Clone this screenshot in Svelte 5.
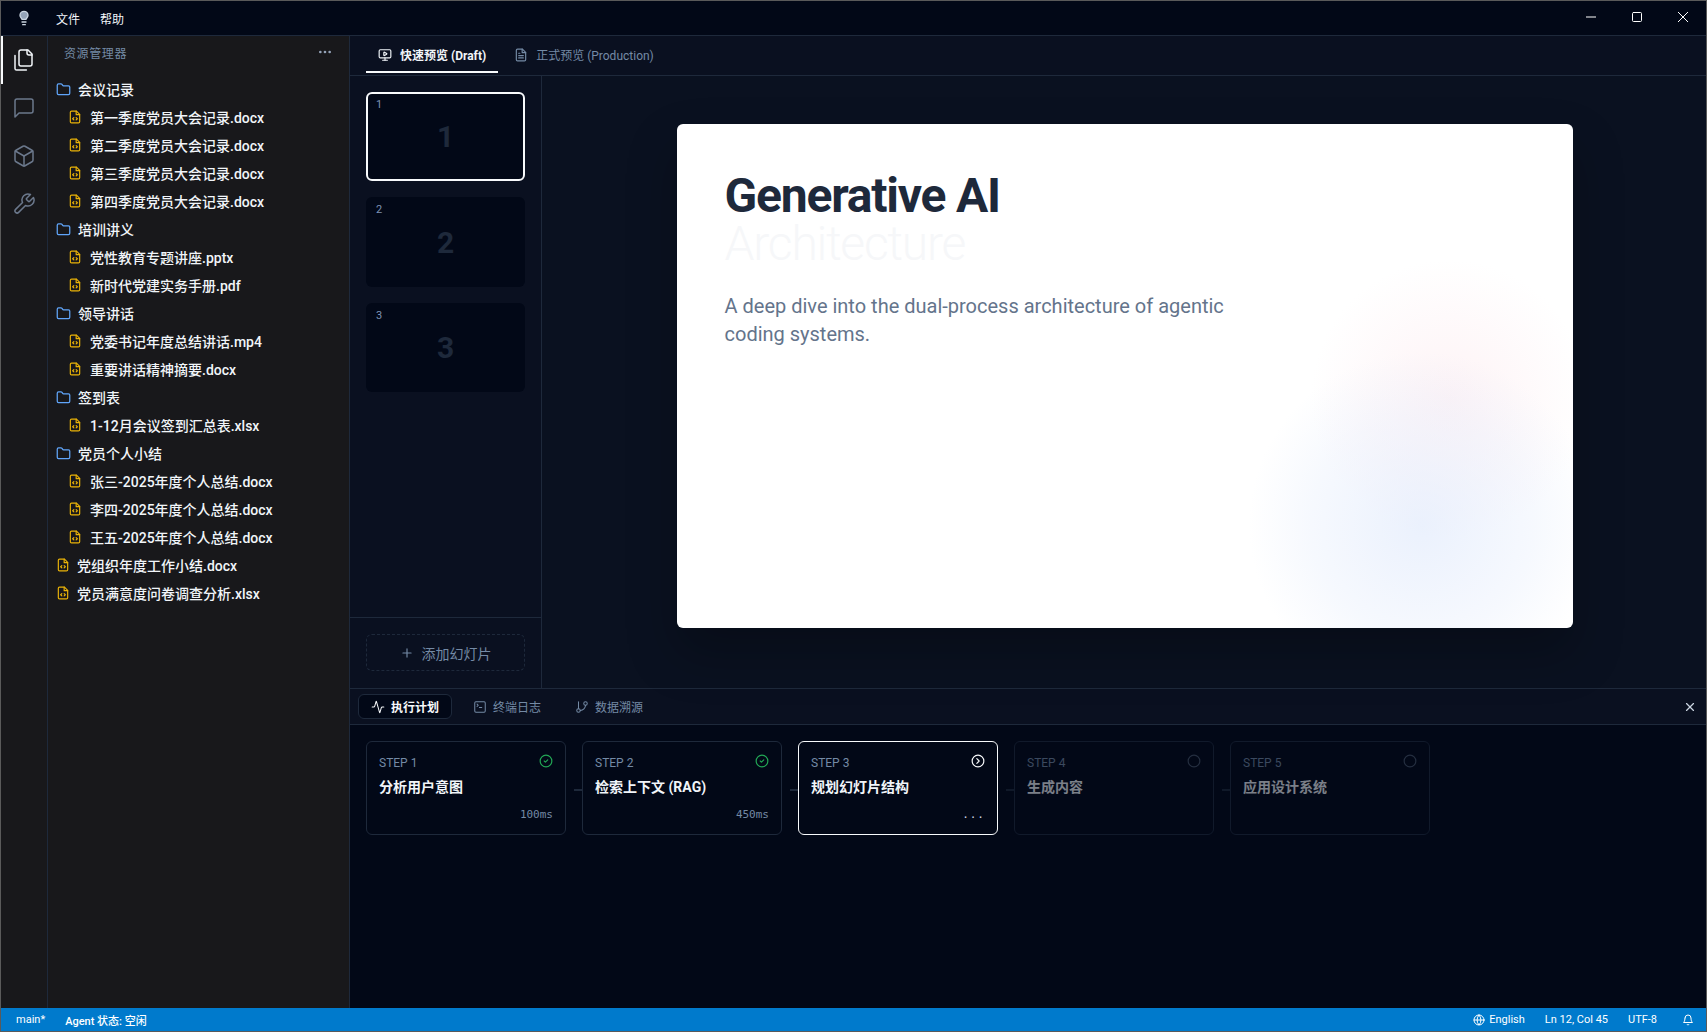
<script>
  const tree = [
    { name: '会议记录', files: ['第一季度党员大会记录.docx', '第二季度党员大会记录.docx', '第三季度党员大会记录.docx', '第四季度党员大会记录.docx'] },
    { name: '培训讲义', files: ['党性教育专题讲座.pptx', '新时代党建实务手册.pdf'] },
    { name: '领导讲话', files: ['党委书记年度总结讲话.mp4', '重要讲话精神摘要.docx'] },
    { name: '签到表', files: ['1-12月会议签到汇总表.xlsx'] },
    { name: '党员个人小结', files: ['张三-2025年度个人总结.docx', '李四-2025年度个人总结.docx', '王五-2025年度个人总结.docx'] },
  ];
  const rootFiles = ['党组织年度工作小结.docx', '党员满意度问卷调查分析.xlsx'];
  const steps = [
    { n: 1, title: '分析用户意图', time: '100ms', state: 'done' },
    { n: 2, title: '检索上下文 (RAG)', time: '450ms', state: 'done' },
    { n: 3, title: '规划幻灯片结构', time: '...', state: 'run' },
    { n: 4, title: '生成内容', state: 'todo' },
    { n: 5, title: '应用设计系统', state: 'todo' },
  ];
</script>

{#snippet fileIcon()}
  <svg class="ficon" viewBox="0 0 24 24"><path d="M14.5 2H6a2 2 0 0 0-2 2v16a2 2 0 0 0 2 2h12a2 2 0 0 0 2-2V7.5L14.5 2z"/><path d="M14 2v6h6"/><path d="m10 13-2 2 2 2"/><path d="m14 17 2-2-2-2"/></svg>
{/snippet}

<div class="app">
  <header class="titlebar">
    <svg class="bulb" viewBox="0 0 24 24"><path d="M15 14c.2-1 .7-1.7 1.5-2.5 1-.9 1.5-2.2 1.5-3.5A6 6 0 0 0 6 8c0 1 .2 2.2 1.5 3.5.7.7 1.3 1.5 1.5 2.5z"/><path d="M9 18h6"/><path d="M10 22h4"/></svg>
    <span class="menu">文件</span>
    <span class="menu">帮助</span>
    <div class="winctl">
      <svg viewBox="0 0 10 10"><path d="M0 5h10"/></svg>
      <svg viewBox="0 0 10 10"><rect x=".5" y=".5" width="9" height="9" rx="1"/></svg>
      <svg viewBox="0 0 10 10"><path d="M0 0l10 10M10 0L0 10"/></svg>
    </div>
  </header>

  <div class="body">
    <nav class="rail">
      <div class="rail-item active">
        <svg viewBox="0 0 24 24"><path d="M20 7h-3a2 2 0 0 1-2-2V2"/><path d="M9 18a2 2 0 0 1-2-2V4a2 2 0 0 1 2-2h7l4 4v10a2 2 0 0 1-2 2Z"/><path d="M3 7.6v12.8A1.6 1.6 0 0 0 4.6 22h9.8"/></svg>
      </div>
      <div class="rail-item">
        <svg viewBox="0 0 24 24"><path d="M21 15a2 2 0 0 1-2 2H7l-4 4V5a2 2 0 0 1 2-2h14a2 2 0 0 1 2 2z"/></svg>
      </div>
      <div class="rail-item">
        <svg viewBox="0 0 24 24"><path d="M21 8a2 2 0 0 0-1-1.73l-7-4a2 2 0 0 0-2 0l-7 4A2 2 0 0 0 3 8v8a2 2 0 0 0 1 1.73l7 4a2 2 0 0 0 2 0l7-4A2 2 0 0 0 21 16Z"/><path d="m3.3 7 8.7 5 8.7-5"/><path d="M12 22V12"/></svg>
      </div>
      <div class="rail-item">
        <svg viewBox="0 0 24 24"><path d="M14.7 6.3a1 1 0 0 0 0 1.4l1.6 1.6a1 1 0 0 0 1.4 0l3.77-3.77a6 6 0 0 1-7.94 7.94l-6.91 6.91a2.12 2.12 0 0 1-3-3l6.91-6.91a6 6 0 0 1 7.94-7.94l-3.76 3.76z"/></svg>
      </div>
    </nav>

    <aside class="sidebar">
      <div class="side-head">
        <span>资源管理器</span>
        <svg viewBox="0 0 24 24"><circle cx="5" cy="12" r="1"/><circle cx="12" cy="12" r="1"/><circle cx="19" cy="12" r="1"/></svg>
      </div>
      <div class="tree">
        {#each tree as folder}
          <div class="row">
            <svg class="ficon folder" viewBox="0 0 24 24"><path d="M20 20a2 2 0 0 0 2-2V8a2 2 0 0 0-2-2h-7.9a2 2 0 0 1-1.69-.9L9.6 3.9A2 2 0 0 0 7.93 3H4a2 2 0 0 0-2 2v13a2 2 0 0 0 2 2Z"/></svg>
            <span>{folder.name}</span>
          </div>
          {#each folder.files as f}
            <div class="row child">{@render fileIcon()}<span>{f}</span></div>
          {/each}
        {/each}
        {#each rootFiles as f}
          <div class="row">{@render fileIcon()}<span>{f}</span></div>
        {/each}
      </div>
    </aside>

    <main class="main">
      <div class="tabs">
        <div class="tab on">
          <svg viewBox="0 0 24 24"><path d="M10 7.75a.75.75 0 0 1 1.142-.638l3.664 2.249a.75.75 0 0 1 0 1.278l-3.664 2.25a.75.75 0 0 1-1.142-.64z"/><path d="M12 17v4"/><path d="M8 21h8"/><rect x="2" y="3" width="20" height="14" rx="2"/></svg>
          快速预览 (Draft)
        </div>
        <div class="tab">
          <svg viewBox="0 0 24 24"><path d="M14.5 2H6a2 2 0 0 0-2 2v16a2 2 0 0 0 2 2h12a2 2 0 0 0 2-2V7.5L14.5 2z"/><path d="M14 2v6h6"/><path d="M16 13H8"/><path d="M16 17H8"/><path d="M10 9H8"/></svg>
          正式预览 (Production)
        </div>
      </div>

      <div class="workspace">
        <div class="thumbs">
          <div class="thumb-list">
            {#each [1, 2, 3] as n}
              <div class="thumb" class:current={n === 1}>
                <span class="thumb-n">{n}</span>
                <span class="thumb-big">{n}</span>
              </div>
            {/each}
          </div>
          <div class="thumb-foot">
            <div class="add">
              <svg viewBox="0 0 24 24"><path d="M5 12h14"/><path d="M12 5v14"/></svg>
              添加幻灯片
            </div>
          </div>
        </div>

        <div class="stage">
          <section class="slide">
            <div class="blob pink"></div>
            <div class="blob blue"></div>
            <h1>Generative AI<span>Architecture</span></h1>
            <p>A deep dive into the dual-process architecture of agentic coding systems.</p>
          </section>
        </div>
      </div>

      <div class="panel">
        <div class="panel-tabs">
          <div class="ptab on">
            <svg viewBox="0 0 24 24"><path d="M22 12h-2.48a2 2 0 0 0-1.93 1.46l-2.35 8.36a.25.25 0 0 1-.48 0L9.24 2.18a.25.25 0 0 0-.48 0l-2.35 8.36A2 2 0 0 1 4.49 12H2"/></svg>
            执行计划
          </div>
          <div class="ptab">
            <svg viewBox="0 0 24 24"><path d="m7 11 2-2-2-2"/><path d="M11 13h4"/><rect x="3" y="3" width="18" height="18" rx="2"/></svg>
            终端日志
          </div>
          <div class="ptab">
            <svg viewBox="0 0 24 24"><path d="M6 3v12"/><circle cx="18" cy="6" r="3"/><circle cx="6" cy="18" r="3"/><path d="M18 9a9 9 0 0 1-9 9"/></svg>
            数据溯源
          </div>
          <svg class="panel-x" viewBox="0 0 24 24"><path d="M18 6 6 18"/><path d="m6 6 12 12"/></svg>
        </div>
        <div class="steps">
          {#each steps as s, i}
            <div class="step {s.state}">
              {#if i > 0}<i class="link"></i>{/if}
              <div class="step-top">
                <span>STEP {s.n}</span>
                <svg viewBox="0 0 24 24">
                  <circle cx="12" cy="12" r="10"/>
                  {#if s.state === 'done'}<path d="m9 12 2 2 4-4"/>{/if}
                  {#if s.state === 'run'}<path d="m10 8 4 4-4 4"/>{/if}
                </svg>
              </div>
              <div class="step-title">{s.title}</div>
              {#if s.time}<div class="step-time">{s.time}</div>{/if}
            </div>
          {/each}
        </div>
      </div>
    </main>
  </div>

  <footer class="status">
    <span>main*</span>
    <span class="agent">Agent 状态: 空闲</span>
    <span class="right globe">
      <svg viewBox="0 0 24 24"><circle cx="12" cy="12" r="10"/><path d="M12 2a14.5 14.5 0 0 0 0 20 14.5 14.5 0 0 0 0-20"/><path d="M2 12h20"/></svg>
      English
    </span>
    <span>Ln 12, Col 45</span>
    <span>UTF-8</span>
    <svg class="bell" viewBox="0 0 24 24"><path d="M6 8a6 6 0 0 1 12 0c0 7 3 9 3 9H3s3-2 3-9"/><path d="M10.3 21a1.94 1.94 0 0 0 3.4 0"/></svg>
  </footer>
</div>

<style>
  :global(body) { margin: 0; background: #020817; }
  * { box-sizing: border-box; }
  svg { fill: none; stroke: currentColor; stroke-width: 2; stroke-linecap: round; stroke-linejoin: round; flex: none; }

  .app { height: 100vh; display: flex; flex-direction: column; overflow: hidden;
    border: 1px solid #5a5a5a; background: #020817; color: #f1f5f9;
    font-family: Roboto, "Noto Sans CJK SC", sans-serif; }

  .titlebar { height: 35px; flex: none; display: flex; align-items: center;
    border-bottom: 1px solid #1e293b; font-size: 12px; }
  .bulb { width: 16px; height: 16px; margin: 0 24px 0 15px; color: #cbd5e1; fill: #94a3b8; }
  .menu { margin-right: 20px; color: #f1f5f9; }
  .winctl { margin-left: auto; display: flex; gap: 36px; margin-right: 18px; padding-bottom: 2px; color: #fff; }
  .winctl svg { width: 10px; height: 10px; stroke-width: 1; }

  .body { flex: 1; min-height: 0; display: flex; }

  .rail { width: 47px; flex: none; background: #18181b; border-right: 1px solid #1e293b; }
  .rail-item { height: 48px; display: flex; align-items: center; justify-content: center; color: #6b788c; }
  .rail-item svg { width: 24px; height: 24px; stroke-width: 1.5; }
  .rail-item.active { color: #f1f5f9; border-left: 2px solid #f8fafc; padding-right: 2px; }

  .sidebar { width: 302px; flex: none; background: #18181b; border-right: 1px solid #1e293b; }
  .side-head { height: 32px; padding: 0 16px; display: flex; align-items: center; justify-content: space-between;
    font-size: 12px; letter-spacing: .6px; color: #748aa5; }
  .side-head svg { width: 16px; height: 16px; color: #94a3b8; }
  .tree { padding: 7px 8px; }
  .row { height: 28px; display: flex; align-items: center; gap: 7px; padding-left: 0;
    font-size: 14px; font-weight: 500; color: #f1f5f9; white-space: nowrap; }
  .row.child { padding-left: 12px; gap: 8px; }
  .ficon { width: 14px; height: 14px; color: #eab308; margin-left: 0; }
  .ficon.folder { width: 15px; height: 15px; color: #60a5fa; margin-right: 0; }

  .main { flex: 1; min-width: 0; display: flex; flex-direction: column; }

  .tabs { height: 40px; flex: none; display: flex; gap: 4px; padding: 0 16px; background: #0a1020;
    border-bottom: 1px solid #1e293b; }
  .tab { height: 37px; padding: 2px 12px 0; display: flex; align-items: center; gap: 8px; font-size: 12px;
    color: #748aa5; border-bottom: 2px solid transparent; }
  .tab svg { width: 14px; height: 14px; }
  .tab.on { color: #f1f5f9; font-weight: 700; border-bottom-color: #f8fafc; }

  .workspace { height: 613px; flex: none; display: flex; border-bottom: 1px solid #1e293b; }

  .thumbs { width: 192px; flex: none; display: flex; flex-direction: column; background: #0a1020;
    border-right: 1px solid #1e293b; }
  .thumb-list { flex: 1; padding: 16px; display: flex; flex-direction: column; gap: 16px; }
  .thumb { aspect-ratio: 16 / 9; width: 159px; border-radius: 6px; background: #020817; position: relative;
    display: flex; align-items: center; justify-content: center; }
  .thumb.current { outline: 2px solid #f8fafc; outline-offset: -2px; }
  .thumb-n { position: absolute; left: 10px; top: 6px; font-size: 11px; color: #7e92b5; }
  .thumb-big { font-size: 30px; font-weight: 700; color: #1e293b; }
  .thumb-foot { height: 71px; flex: none; padding: 16px; border-top: 1px solid #1e293b; }
  .add { height: 37px; width: 159px; border: 1px dashed #1e293b; border-radius: 6px; display: flex;
    align-items: center; justify-content: center; gap: 8px; font-size: 14px; color: #748aa5; }
  .add svg { width: 14px; height: 14px; }

  .stage { flex: 1; min-width: 0; display: flex; align-items: center; justify-content: center;
    background: #0a1120; padding: 0 0 12px 1px; }
  .slide { position: relative; overflow: hidden; width: 896px; height: 504px; padding: 48px; background: #fff;
    border-radius: 6px; box-shadow: 0 25px 50px rgba(0, 0, 0, .25); }
  .slide h1 { margin: 0 0 24px; font-size: 48px; line-height: 48px; font-weight: 700; letter-spacing: -.025em; color: #1e293b; position: relative; }
  .slide h1 span { display: block; font-weight: 300; color: #f6f7f9; }
  .slide p { margin: 0; max-width: 512px; font-size: 20px; line-height: 28px; color: #64748b; position: relative; }
  .blob { position: absolute; border-radius: 50%; }
  .pink { left: 632px; top: 134px; width: 280px; height: 280px;
    background: radial-gradient(circle, rgba(252, 231, 236, .5), rgba(252, 231, 236, .18) 45%, rgba(252, 231, 236, 0) 70%); }
  .blue { left: 570px; top: 226px; width: 350px; height: 350px;
    background: radial-gradient(circle, rgba(226, 235, 252, .7), rgba(226, 235, 252, .3) 45%, rgba(226, 235, 252, 0) 70%); }

  .panel { flex: 1; min-height: 0; display: flex; flex-direction: column; }
  .panel-tabs { height: 36px; flex: none; display: flex; align-items: center; gap: 8px; padding: 0 8px;
    background: #0a1020; border-bottom: 1px solid #1e293b; }
  .ptab { height: 25px; width: 94px; padding: 0 12px; display: flex; align-items: center; gap: 6px;
    font-size: 12px; color: #748aa5; border: 1px solid transparent; border-radius: 6px; }
  .ptab svg { width: 14px; height: 14px; flex: none; stroke-width: 1.75; }
  .ptab.on { color: #f8fafc; font-weight: 700; background: #020817; border-color: #1e293b; }
  .panel-x { margin-left: auto; width: 14px; height: 14px; margin-right: 1px; color: #cbd5e1; }

  .steps { padding: 16px; display: flex; gap: 16px; }
  .step { position: relative; width: 200px; height: 94px; padding: 12px; border: 1px solid #1e293b;
    border-radius: 6px; background: #020817; }
  .step-top { display: flex; justify-content: space-between; align-items: flex-start; font-size: 12px; color: #748aa5; line-height: 18px; }
  .step-top svg { width: 14px; height: 14px; color: #475569; }
  .step-title { margin-top: 5px; font-size: 14px; line-height: 20px; font-weight: 700; color: #f1f5f9; }
  .step-time { position: absolute; right: 12px; bottom: 12px; font: 11px/14px "DejaVu Sans Mono", monospace; color: #748aa5; }
  .link { position: absolute; left: -9px; top: 47px; width: 8px; height: 2px; background: #1e293b; }
  .step.done svg { color: #22a755; }
  .step.run { border-color: #f8fafc; }
  .step.run svg { color: #f8fafc; }
  .step.run .step-time { color: #cbd5e1; letter-spacing: 1px; }
  .step.todo { border-color: #111a2b; }
  .step.todo > * { opacity: .5; }

  .status { height: 23px; flex: none; display: flex; align-items: center; gap: 20px; padding: 0 12px 0 15px;
    background: #007acc; color: #fff; font-size: 11px; }
  .status .agent { font-weight: 500; }
  .status .right { margin-left: auto; }
  .globe { display: flex; align-items: center; gap: 4px; }
  .globe svg, .bell { width: 12px; height: 12px; }
  .bell { margin-left: 5px; }
</style>
